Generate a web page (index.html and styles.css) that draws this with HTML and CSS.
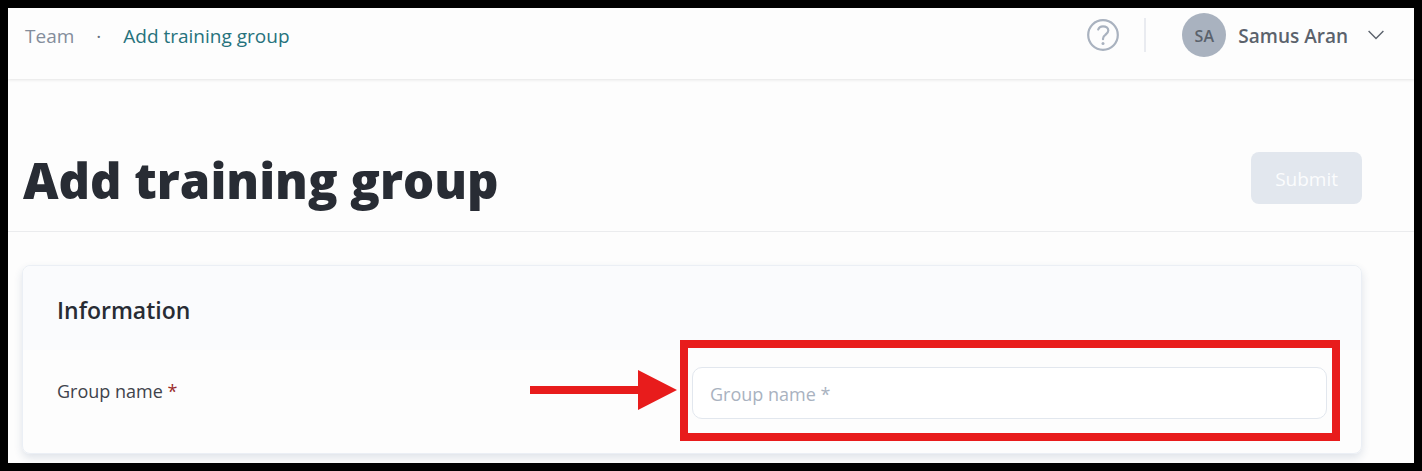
FILE: index.html
```html
<!DOCTYPE html>
<html lang="en">
<head>
  <meta charset="UTF-8">
  <meta name="viewport" content="width=device-width, initial-scale=1.0">
  <title>Add training group</title>
  <link rel="stylesheet" href="styles.css">
</head>
<body>
  <!-- Top bar -->
  <header class="topbar">
    <nav class="breadcrumb" aria-label="Breadcrumb">
      <a href="#" class="crumb">Team</a>
      <span class="crumb-dot">·</span>
      <a href="#" class="crumb crumb-active">Add training group</a>
    </nav>
    <div class="topbar-right">
      <button type="button" class="help-button" aria-label="Help">
        <svg width="32" height="32" viewBox="0 0 32 32" fill="none" stroke="currentColor" stroke-width="2.200" stroke-linecap="round">
          <circle cx="16" cy="16" r="14.800"/>
          <path d="M11.200 10.500C11.900 8.500 13.600 7.300 16 7.300c3 0 5.300 1.700 5.300 4.300 0 2.200-1.500 3.200-3 4.300-1.600 1.100-2.300 2-2.300 3.900v.4"/>
          <circle cx="16" cy="24.500" r="1.500" fill="currentColor" stroke="none"/>
        </svg>
      </button>
      <span class="divider"></span>
      <button type="button" class="user-menu">
        <span class="avatar">SA</span>
        <span class="user-name">Samus Aran</span>
        <svg width="16" height="10" viewBox="0 0 16 10" fill="none" stroke="currentColor" stroke-width="1.400">
          <path d="M.6 1L8 8.500 15.400 1"/>
        </svg>
      </button>
    </div>
  </header>

  <main>
    <form>
      <div class="page-head">
        <h1>Add training group</h1>
        <button type="submit" class="submit-button" disabled>Submit</button>
      </div>

      <!-- Information card -->
      <section class="card">
        <h2 class="card-title">Information</h2>
        <div class="form-row">
          <label for="group-name">Group name <span class="required">*</span></label>
          <div class="field">
            <input type="text" id="group-name" placeholder="Group name *">
            <svg class="arrow" width="147" height="40" viewBox="0 0 147 40" fill="currentColor">
              <path d="M0 16h108V0l39 20-39 20V24H0z"/>
            </svg>
            <span class="highlight"></span>
          </div>
        </div>
      </section>
    </form>
  </main>
</body>
</html>
```
FILE: styles.css
```css
* {
  box-sizing: border-box;
}
body {
  margin: 0;
  min-height: 100vh;
  border: 8px solid #000;
  background: #fdfdfd;
  font-family: 'Segoe UI', 'Open Sans', 'Noto Sans', sans-serif;
  font-size: 19px;
  line-height: 28px;
  color: #3f434b;
}
h1, h2 {
  margin: 0;
  color: #282c34;
}
button, input {
  font: inherit;
}
.topbar {
  display: flex;
  justify-content: space-between;
  align-items: flex-start;
  height: 71px;
  padding: 5px 30px 0 17px;
  box-shadow: 0 1px 3px rgba(0, 0, 0, 0.1);
}
.breadcrumb {
  display: flex;
  align-items: center;
  gap: 22px;
  height: 46px;
}
.crumb {
  color: #848d9b;
  text-decoration: none;
}
.crumb-dot {
  color: #66707f;
}
.crumb-active {
  color: #26727c;
}
.topbar-right {
  display: flex;
  align-items: center;
  height: 44px;
}
.help-button,
.user-menu {
  display: flex;
  align-items: center;
  padding: 0;
  border: none;
  background: none;
  cursor: pointer;
}
.help-button {
  color: #a9b2bf;
}
.divider {
  width: 2px;
  height: 34px;
  margin: 0 36px 0 25px;
  background: #e9ebf0;
}
.user-menu {
  color: #5b626c;
  font-weight: 600;
}
.avatar {
  width: 44px;
  height: 44px;
  margin-right: 12px;
  border-radius: 50%;
  background: #a9b2bf;
  font-size: 16px;
  line-height: 46px;
}
.user-name {
  margin-right: 20px;
  padding-top: 2px;
}
.page-head {
  display: flex;
  justify-content: space-between;
  align-items: center;
  padding: 68px 52px 18px 15px;
  border-bottom: 1px solid #ebecee;
}
h1 {
  font-size: 49px;
  line-height: 66px;
  font-weight: 800;
}
.submit-button {
  height: 52px;
  margin-bottom: 4px;
  padding: 2px 24px 0;
  border: none;
  border-radius: 8px;
  background: #e2e7ee;
  color: #fbfcfd;
}
.card {
  margin: 33px 52px 8px 14px;
  border: 1px solid #ebeff5;
  border-radius: 8px;
  box-shadow: 0 4px 8px rgba(40, 70, 110, 0.14);
}
.card-title {
  padding: 28px 34px 24px;
  border-radius: 8px 8px 0 0;
  background: #fafbfd;
  font-size: 23px;
  line-height: 32px;
  font-weight: 600;
}
.form-row {
  display: grid;
  grid-template-columns: 1fr 1fr;
  align-items: start;
  padding: 17px 34px 34px;
  font-size: 18px;
}
.form-row label {
  padding-top: 10px;
}
.required {
  color: #9b2c2c;
}
.field {
  position: relative;
}
input {
  display: block;
  width: 100%;
  height: 52px;
  padding: 2px 17px 0;
  border: 1px solid #e2e7ee;
  border-radius: 10px;
  background: #fff;
  color: #3f434b;
}
input::placeholder {
  color: #a9b2bf;
  opacity: 1;
}
/* red callout over the field */
.highlight {
  position: absolute;
  inset: -27px -13px -22px -12px;
  border: 8px solid #e81c1c;
  pointer-events: none;
}
.arrow {
  position: absolute;
  top: 3px;
  right: calc(100% + 15px);
  color: #e81c1c;
}
```
